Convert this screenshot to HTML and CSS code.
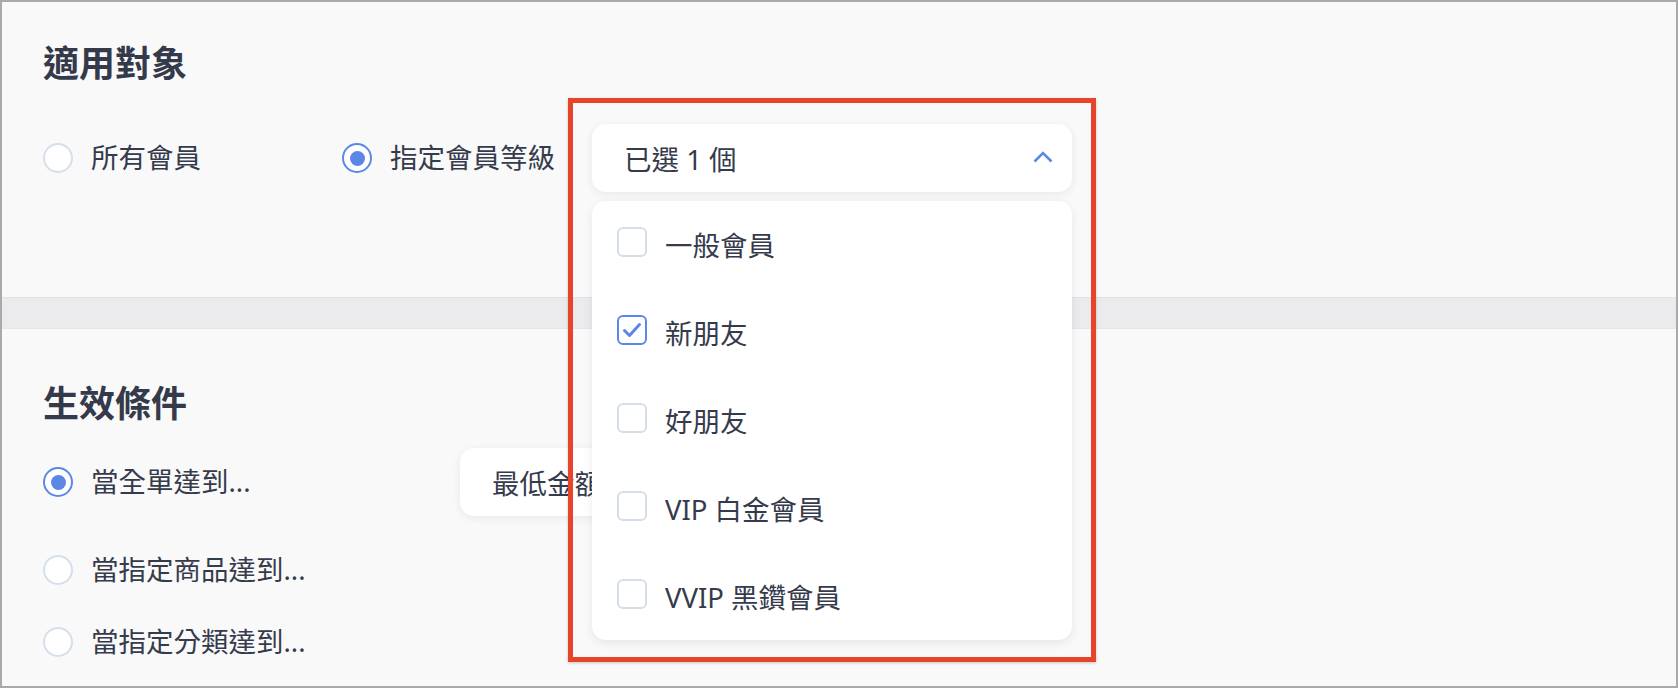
FILE: index.html
```html
<!DOCTYPE html>
<html lang="zh-Hant">
<head>
    <meta charset="UTF-8">
    <meta name="viewport" content="width=device-width, initial-scale=1.0">
    <title>優惠設定</title>
    <link rel="stylesheet" href="styles.css">
</head>
<body>
    <!-- Target members -->
    <section class="panel panel-target">
        <h2 class="panel-title">適用對象</h2>
        <div class="choice-row">
            <label class="radio radio-all">
                <span class="radio-mark"></span>
                <span>所有會員</span>
            </label>
            <label class="radio radio-level checked">
                <span class="radio-mark"></span>
                <span>指定會員等級</span>
            </label>

            <div class="select">
                <div class="select-trigger">
                    <span>已選 1 個</span>
                    <svg class="chevron" width="20" height="12" viewBox="0 0 20 12">
                        <polyline points="1.5,10.5 10,2 18.5,10.5" fill="none" stroke="#5b87e6" stroke-width="2.6"/>
                    </svg>
                </div>

                <ul class="select-menu">
                    <li class="select-option">
                        <span class="checkbox"></span>
                        <span class="option-label">一般會員</span>
                    </li>
                    <li class="select-option">
                        <span class="checkbox checked">
                            <svg width="26" height="26" viewBox="0 0 26 26">
                                <polyline points="5.5,13.5 10.5,18.5 20.5,7.5" fill="none" stroke="#5b87e6" stroke-width="3" stroke-linecap="round" stroke-linejoin="round"/>
                            </svg>
                        </span>
                        <span class="option-label">新朋友</span>
                    </li>
                    <li class="select-option">
                        <span class="checkbox"></span>
                        <span class="option-label">好朋友</span>
                    </li>
                    <li class="select-option">
                        <span class="checkbox"></span>
                        <span class="option-label">VIP 白金會員</span>
                    </li>
                    <li class="select-option">
                        <span class="checkbox"></span>
                        <span class="option-label">VVIP 黑鑽會員</span>
                    </li>
                </ul>

                <div class="highlight"></div>
            </div>
        </div>
    </section>

    <div class="divider"></div>

    <!-- Conditions -->
    <section class="panel panel-conditions">
        <h2 class="panel-title">生效條件</h2>
        <div class="condition-list">
            <div class="condition">
                <label class="radio radio-wide checked">
                    <span class="radio-mark"></span>
                    <span>當全單達到...</span>
                </label>
                <div class="field">最低金額</div>
            </div>
            <div class="condition">
                <label class="radio">
                    <span class="radio-mark"></span>
                    <span>當指定商品達到...</span>
                </label>
            </div>
            <div class="condition">
                <label class="radio">
                    <span class="radio-mark"></span>
                    <span>當指定分類達到...</span>
                </label>
            </div>
        </div>
    </section>
</body>
</html>
```

FILE: styles.css
```css
/* Base */
* {
    margin: 0;
    padding: 0;
    box-sizing: border-box;
}

body {
    font-family: 'Noto Sans', 'Noto Sans CJK TC', sans-serif;
    font-size: 27.5px;
    color: #363b4c;
    background: #f9f9fa;
    border: 2px solid #a9a9a9;
    height: 688px;
    overflow: hidden;
}

/* Panels */
.panel {
    padding: 0 41px;
}

.panel-target {
    height: 295px;
    padding-top: 37px;
}

.panel-conditions {
    padding-top: 50px;
}

.panel-title {
    font-size: 36px;
    line-height: 50px;
    font-weight: 700;
    color: #343a4a;
}

.panel-target .panel-title {
    margin-bottom: 35px;
}

.panel-conditions .panel-title {
    margin-bottom: 19px;
}

.divider {
    height: 32px;
    background: #ebebed;
    border-top: 1px solid #e2e3e6;
    border-bottom: 1px solid #e6e7e9;
}

/* Radios */
.choice-row {
    display: flex;
    align-items: center;
    height: 68px;
}

.radio {
    display: flex;
    align-items: center;
    gap: 18px;
    line-height: 36px;
    white-space: nowrap;
}

.radio-all {
    width: 299px;
}

.radio-level {
    width: 250px;
}

.radio-wide {
    width: 417px;
}

.radio-mark {
    width: 30px;
    height: 30px;
    border-radius: 50%;
    border: 2px solid #d6dfe9;
    background: #fff;
    display: flex;
    align-items: center;
    justify-content: center;
    flex-shrink: 0;
}

.radio.checked .radio-mark {
    border-color: #5b87e6;
}

.radio.checked .radio-mark::after {
    content: '';
    width: 15px;
    height: 15px;
    border-radius: 50%;
    background: #5b87e6;
}

/* Dropdown */
.select {
    position: relative;
    width: 480px;
}

.select-trigger {
    height: 68px;
    background: #fff;
    border-radius: 14px;
    box-shadow: 0 2px 8px rgba(30, 40, 70, 0.08);
    padding: 0 19px 0 32px;
    display: flex;
    align-items: center;
    justify-content: space-between;
}

.chevron {
    margin-top: -2px;
}

.select-menu {
    position: absolute;
    top: 77px;
    left: 0;
    width: 480px;
    height: 439px;
    list-style: none;
    background: #fff;
    border-radius: 14px;
    box-shadow: 0 3px 10px rgba(30, 40, 70, 0.09);
    padding: 11px 0 0 25px;
    display: flex;
    flex-direction: column;
    gap: 28px;
    z-index: 10;
}

.select-option {
    height: 60px;
    display: flex;
    align-items: center;
    gap: 18px;
}

.option-label {
    padding-top: 4px;
}

.checkbox {
    width: 30px;
    height: 30px;
    border: 2px solid #d6dfe9;
    border-radius: 6px;
    background: #fff;
    display: flex;
    align-items: center;
    justify-content: center;
    flex-shrink: 0;
}

.checkbox.checked {
    border-color: #5b87e6;
}

/* Annotation frame round the dropdown */
.highlight {
    position: absolute;
    left: -24px;
    top: -26px;
    width: 528px;
    height: 564px;
    border: 5px solid #e8442c;
    box-shadow: 0 1px 3px rgba(0, 0, 0, 0.2);
    pointer-events: none;
    z-index: 11;
}

/* Conditions */
.condition-list {
    display: flex;
    flex-direction: column;
    gap: 36px;
}

.condition {
    display: flex;
    align-items: center;
}

.field {
    width: 480px;
    height: 68px;
    background: #fff;
    border-radius: 14px;
    box-shadow: 0 2px 8px rgba(30, 40, 70, 0.08);
    padding: 0 32px;
    display: flex;
    align-items: center;
}
```
